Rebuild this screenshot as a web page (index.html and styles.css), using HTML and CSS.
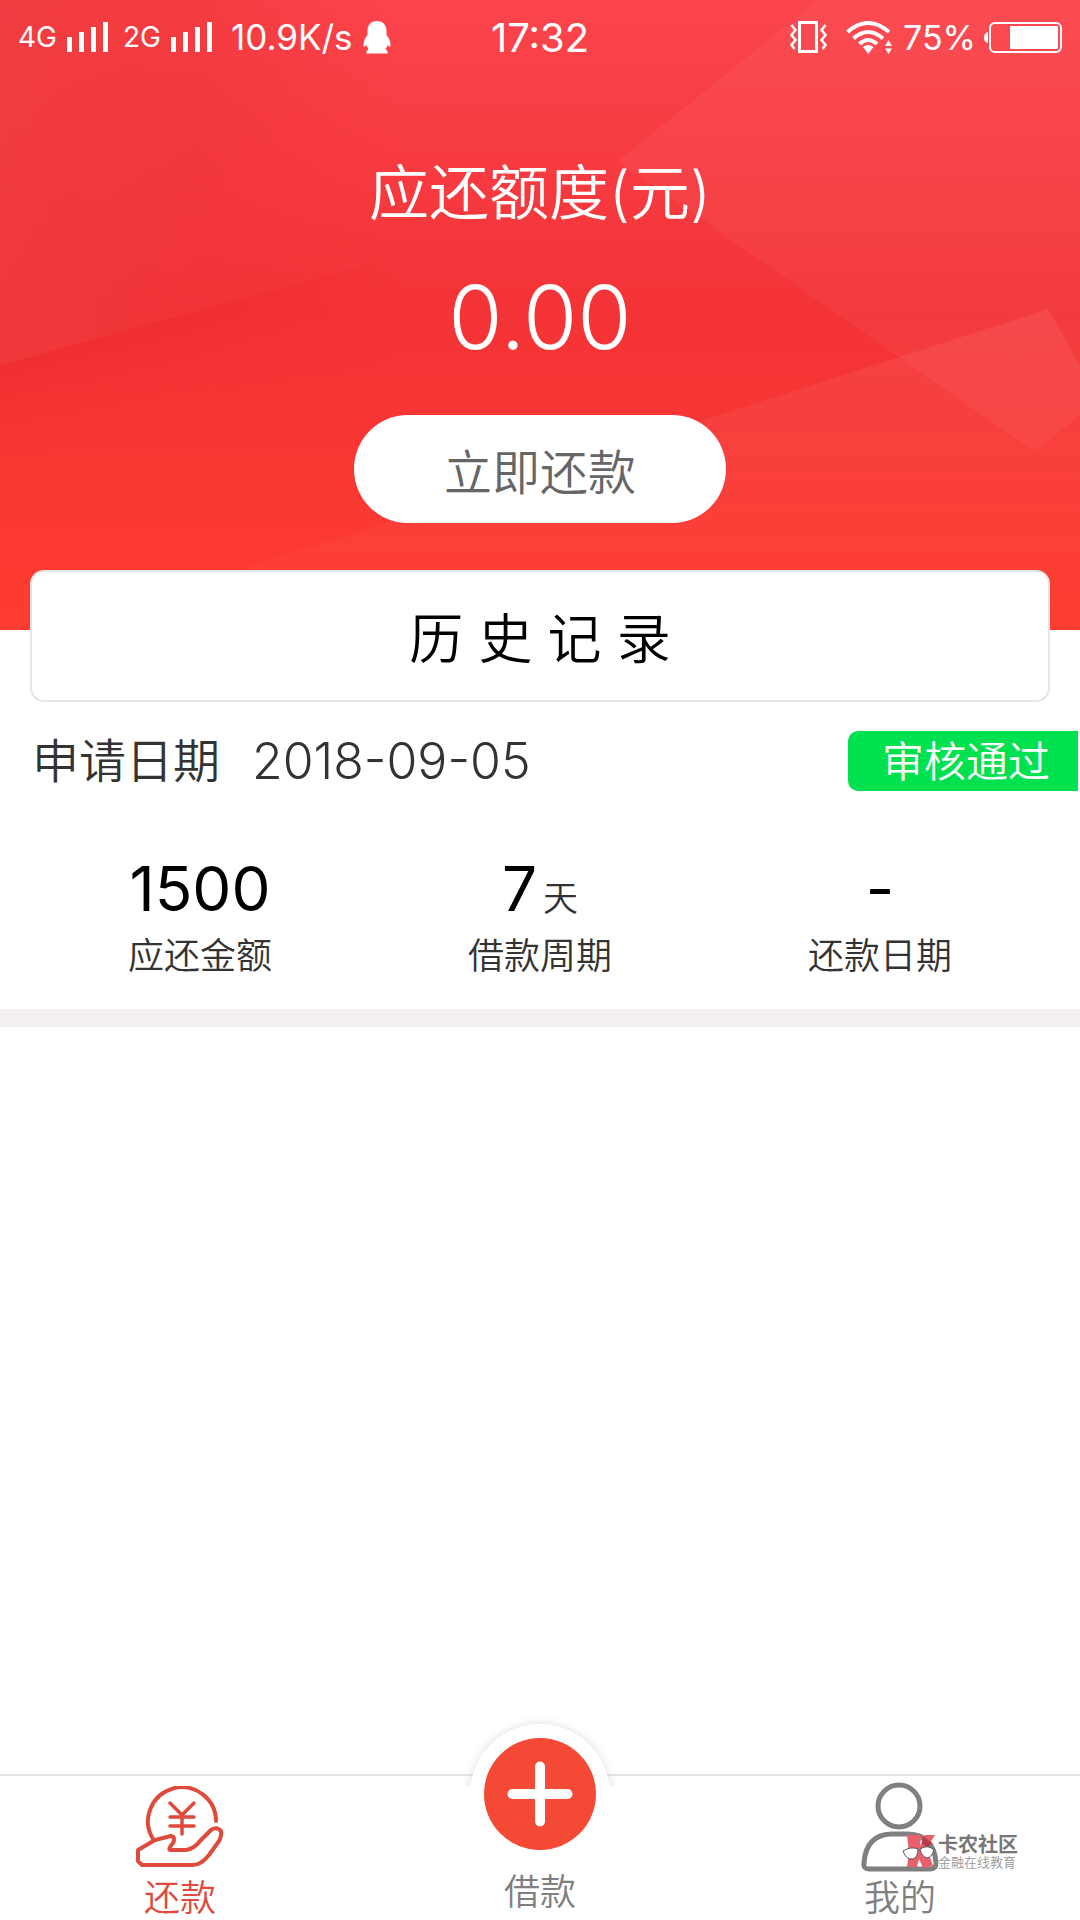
FILE: index.html
```html
<!DOCTYPE html>
<html lang="zh-CN">
<head>
  <meta charset="UTF-8">
  <meta name="viewport" content="width=device-width, initial-scale=1">
  <title>还款</title>
  <link rel="stylesheet" href="styles.css">
</head>
<body>

  <header class="hero">
    <svg class="hero-bg" viewBox="0 0 1080 630" preserveAspectRatio="none" aria-hidden="true">
      <defs>
        <linearGradient id="base" x1="0" y1="0" x2="0" y2="1">
          <stop offset="0" stop-color="#fb444c"/>
          <stop offset="0.5" stop-color="#f33336"/>
          <stop offset="1" stop-color="#ff3c30"/>
        </linearGradient>
        <linearGradient id="left" x1="0" y1="0" x2="1" y2="0">
          <stop offset="0" stop-color="#ee3b3e" stop-opacity="0.7"/>
          <stop offset="0.5" stop-color="#ee3436" stop-opacity="0.5"/>
          <stop offset="1" stop-color="#f33336" stop-opacity="0"/>
        </linearGradient>
        <linearGradient id="fold" gradientUnits="userSpaceOnUse" x1="180" y1="312" x2="206" y2="410">
          <stop offset="0" stop-color="#ec2a2b" stop-opacity="0.6"/>
          <stop offset="1" stop-color="#f33336" stop-opacity="0"/>
        </linearGradient>
        <linearGradient id="fade" x1="0" y1="0" x2="1" y2="0">
          <stop offset="0" stop-color="#fff"/>
          <stop offset="0.5" stop-color="#fff"/>
          <stop offset="1" stop-color="#000"/>
        </linearGradient>
        <mask id="foldMask" maskUnits="userSpaceOnUse" x="0" y="0" width="420" height="630">
          <rect width="400" height="630" fill="url(#fade)"/>
        </mask>
        <linearGradient id="shine" x1="0" y1="0" x2="0" y2="1">
          <stop offset="0" stop-color="#fff" stop-opacity="0.04"/>
          <stop offset="1" stop-color="#fff" stop-opacity="0.04"/>
        </linearGradient>
        <linearGradient id="glow" x1="0" y1="0" x2="0" y2="1">
          <stop offset="0" stop-color="#fff" stop-opacity="0.07"/>
          <stop offset="1" stop-color="#fff" stop-opacity="0.01"/>
        </linearGradient>
      </defs>
      <rect width="1080" height="630" fill="url(#base)"/>
      <path d="M0 0H400V256L0 365Z" fill="url(#left)"/>
      <path d="M0 365L400 256V500H0Z" fill="url(#fold)" mask="url(#foldMask)"/>
      <path d="M818 0L618 161L1035 452L1080 415V0Z" fill="url(#shine)"/>
      <path d="M60 630L240 570L1048 309L1080 365V630Z" fill="url(#glow)"/>
    </svg>

    <!-- 状态栏 -->
    <div class="status-bar">
      <div class="status-left">
        <span class="net">4G</span>
        <svg class="signal" width="42" height="30" viewBox="0 0 42 30" fill="#fff"><path d="M0 15h5v15H0zM12 10h5v20h-5zM24 5h5v25h-5zM36 0h5v30h-5z"/></svg>
        <span class="net">2G</span>
        <svg class="signal" width="42" height="30" viewBox="0 0 42 30" fill="#fff"><path d="M0 15h5v15H0zM12 10h5v20h-5zM24 5h5v25h-5zM36 0h5v30h-5z"/></svg>
        <span class="speed">10.9K/s</span>
        <svg class="qq" width="28" height="33" viewBox="0 0 28 33" fill="#fff"><path d="M14 0C8 0 4.500 4 4.500 10v4C2 17 .5 20 .5 24c0 2 1 2.500 3 0 .4 1.500 1 3 2 4.500C3.500 29.500 3 31 3.500 32.500h21c.5-1.500 0-3-2-4 1-1.500 1.600-3 2-4.500 2 2.500 3 2 3 0 0-4-1.500-7-4-10v-4C23.500 4 20 0 14 0z"/></svg>
      </div>
      <span class="clock">17:32</span>
      <div class="status-right">
        <svg class="vibrate" width="38" height="32" viewBox="0 0 38 32" fill="none" stroke="#fff"><rect x="9.500" y="1.500" width="17" height="29" stroke-width="3"/><path d="M1.500 4l4 5-4 5 4 5-4 5 3 4M35.500 4l-4 5 4 5-4 5 4 5-3 4" stroke-width="2.500"/></svg>
        <svg class="wifi" width="47" height="33" viewBox="0 0 47 33"><g fill="none" stroke="#fff" stroke-width="4"><path d="M1.500 11Q22 -7 43 11"/><path d="M7.500 17.500Q22 4.500 37 17.500"/><path d="M13.500 23Q22 15 31 23"/></g><path d="M17 26q5-4 10.500 0L22.200 33zM39 25l3.500-6 3.500 6zM39 27.500h7L42.500 33z" fill="#fff"/></svg>
        <span class="percent">75%</span>
        <svg class="battery" width="78" height="31" viewBox="0 0 78 31"><path d="M4 10v11Q0 20 0 15.500T4 10z" fill="#fff"/><rect x="6" y="1" width="71" height="29" rx="5" fill="none" stroke="#fff" stroke-width="2"/><rect x="26" y="4" width="48" height="23" rx="1" fill="#fff"/></svg>
      </div>
    </div>

    <div class="amount">
      <h1 class="amount-title">应还额度(元)</h1>
      <p class="amount-value">0.00</p>
      <button type="button" class="pay-button">立即还款</button>
    </div>
  </header>

  <main>
    <h2 class="history-title">历 史 记 录</h2>

    <section class="record">
      <div class="record-head">
        <span class="record-name">申请日期</span>
        <time class="record-date" datetime="2018-09-05">2018-09-05</time>
        <span class="record-state">审核通过</span>
      </div>
      <div class="record-stats">
        <div class="stat">
          <p class="stat-value">1500</p>
          <p class="stat-label">应还金额</p>
        </div>
        <div class="stat">
          <p class="stat-value">7<span class="stat-unit">天</span></p>
          <p class="stat-label">借款周期</p>
        </div>
        <div class="stat">
          <p class="stat-value">-</p>
          <p class="stat-label">还款日期</p>
        </div>
      </div>
    </section>
  </main>

  <!-- 底部导航 -->
  <nav class="tab-bar">
    <a class="tab active" href="#">
      <svg class="tab-icon" width="90" height="86" viewBox="0 0 90 86" fill="none" stroke="currentColor" stroke-width="4" stroke-linecap="round" stroke-linejoin="round">
        <path d="M18 53A34 34 0 1 1 81 35"/>
        <path d="M35 17l12 12 12-12M47 29v19M35 31h24M35 40h24" stroke-width="3.500"/>
        <path d="M3 64L20 54L36 50Q41 51 38 57Q33 63 35 64H51Q59 63 65 55L76 44Q82 40 86 45Q87 49 84 55L74 69Q66 79 58 79H7L3 75Z"/>
      </svg>
      <span>还款</span>
    </a>
    <a class="tab tab-main" href="#">
      <span class="plus-arc"></span>
      <svg class="plus" width="112" height="112" viewBox="0 0 112 112"><circle cx="56" cy="56" r="56" fill="#f34935"/><path d="M56 28.500v55M28.500 56h55" stroke="#fff" stroke-width="10" stroke-linecap="round"/></svg>
      <span>借款</span>
    </a>
    <a class="tab" href="#">
      <svg class="tab-icon" width="78" height="90" viewBox="0 0 78 90" fill="none" stroke="currentColor" stroke-width="5">
        <circle cx="38" cy="24" r="21"/>
        <path d="M30 52H47Q73 53 75 81Q75 87 69 87H8Q2 87 3 81Q5 53 30 52Z"/>
      </svg>
      <span>我的</span>
    </a>
    <div class="brand">
      <svg width="36" height="36" viewBox="0 0 36 36"><path d="M5 1h14l-1 11 5-11h10l-8 13 6 18-10 2-4-9-2 8H5l2-14z" fill="#e8606c"/><path d="M21 2l9 7-5 5-5-5z" fill="#b83a46"/><path d="M1 17q8-5 15-2 0 8-5 10-7 1-10-8zM18 15q8-5 14 1-2 7-7 8-6-2-7-9z" fill="#fff" stroke="#555" stroke-width="1"/></svg>
      <div>
        <p class="brand-name">卡农社区</p>
        <p class="brand-sub">金融在线教育</p>
      </div>
    </div>
  </nav>

</body>
</html>
```
FILE: styles.css
```css
* {
  box-sizing: border-box;
}

body {
  margin: 0;
  min-height: 100vh;
  display: flex;
  flex-direction: column;
  background: #fff;
  color: #333;
  font-family: Inter, "Noto Sans CJK SC", sans-serif;
  font-weight: 350;
}

h1, h2, p {
  margin: 0;
  font-weight: 350;
}

svg {
  display: block;
  flex-shrink: 0;
}

/* header */
.hero {
  position: relative;
  height: 630px;
  color: #fff;
}

.hero-bg {
  position: absolute;
  top: 0;
  left: 0;
  width: 100%;
  height: 100%;
  z-index: -1;
}

.status-bar {
  display: grid;
  grid-template-columns: 1fr auto 1fr;
  align-items: center;
  height: 74px;
  padding: 0 18px;
  font-weight: 400;
}

.status-left,
.status-right {
  display: flex;
  align-items: center;
}

.status-right {
  justify-content: flex-end;
}

.net {
  font-size: 28px;
}

.signal {
  margin: 0 14px 0 10px;
}

.speed {
  margin-left: 4px;
  font-size: 35px;
}

.percent {
  font-size: 34px;
}

.qq {
  margin-left: 10px;
}

.clock {
  font-size: 40px;
}

.wifi {
  margin: 0 10px 0 18px;
}

.battery {
  margin-left: 8px;
}

.amount {
  display: flex;
  flex-direction: column;
  align-items: center;
  padding-top: 75px;
}

.amount-title {
  font-size: 60px;
  line-height: 88px;
}

.amount-value {
  margin: 24px 0 42px;
  font-size: 88px;
  line-height: 112px;
}

.pay-button {
  width: 372px;
  height: 108px;
  padding: 0;
  border: none;
  border-radius: 54px;
  background: #fff;
  color: #666;
  font-family: inherit;
  font-size: 48px;
  font-weight: 350;
}

/* history */
.history-title {
  position: relative;
  margin: -60px 30px 0;
  padding-top: 8px;
  border: 2px solid #e5e5e5;
  border-radius: 14px;
  background: #fff;
  color: #000;
  font-size: 54px;
  line-height: 120px;
  text-align: center;
}

.record {
  border-bottom: 18px solid #f3f0ef;
}

.record-head {
  display: flex;
  align-items: center;
  height: 60px;
  margin-top: 29px;
  padding: 0 2px 0 32px;
}

.record-name {
  font-size: 47px;
  line-height: 54px;
}

.record-date {
  margin-left: 32px;
  font-size: 50px;
}

.record-state {
  margin-left: auto;
  padding: 2px 28px 0 34px;
  border-radius: 10px 0 0 10px;
  background: #00e150;
  color: #fff;
  font-size: 42px;
  line-height: 58px;
}

.record-stats {
  display: grid;
  grid-template-columns: repeat(3, 1fr);
  padding: 60px 30px 24px;
  text-align: center;
}

.stat-value {
  color: #000;
  font-size: 62px;
  font-weight: 400;
  line-height: 76px;
}

.stat-unit {
  margin-left: 6px;
  color: #333;
  font-size: 35px;
  font-weight: 350;
  line-height: 36px;
}

.stat-label {
  font-size: 36px;
  line-height: 58px;
}

/* tab bar */
.tab-bar {
  position: relative;
  display: grid;
  grid-template-rows: 100%;
  grid-template-columns: repeat(3, 1fr);
  height: 146px;
  margin-top: auto;
  border-top: 2px solid #e5e5e5;
}

.tab {
  display: flex;
  flex-direction: column;
  align-items: center;
  justify-content: flex-end;
  color: #808080;
  font-size: 36px;
  line-height: 44px;
  text-decoration: none;
}

.tab.active {
  color: #e04a3c;
}

.tab-icon {
  margin-bottom: 4px;
}

.tab-main {
  position: relative;
  padding-bottom: 6px;
}

.plus {
  position: relative;
  margin-bottom: 20px;
}

/* raised white ring behind the plus button */
.plus-arc {
  position: absolute;
  top: -60px;
  left: 50%;
  width: 160px;
  height: 70px;
  margin-left: -80px;
  overflow: hidden;
}

.plus-arc::before {
  content: "";
  position: absolute;
  top: 8px;
  left: 10px;
  width: 140px;
  height: 140px;
  border-radius: 50%;
  background: #fff;
  box-shadow: 0 0 10px rgba(0, 0, 0, 0.14);
}

.brand {
  position: absolute;
  right: 62px;
  bottom: 50px;
  display: flex;
  align-items: center;
  color: #777;
}

.brand-name {
  font-size: 20px;
  font-weight: 700;
  line-height: 20px;
}

.brand-sub {
  color: #999;
  font-size: 13px;
  line-height: 14px;
}
```
